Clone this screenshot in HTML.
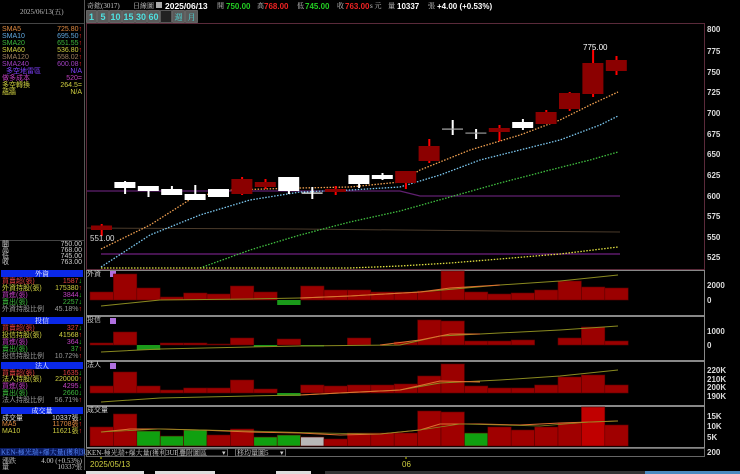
<!DOCTYPE html>
<html><head><meta charset="utf-8"><style>
html,body{margin:0;padding:0;background:#000;width:740px;height:474px;overflow:hidden}
svg{display:block}
text{font-family:"Liberation Sans","Noto Sans CJK TC",sans-serif;font-size:7px}
.s{font-family:"Liberation Serif","Noto Serif CJK SC",serif;font-size:7px}
.b{font-weight:bold;font-size:8.5px}
.b8{font-weight:bold;font-size:8px}
.btn{font-weight:bold;font-size:9px;fill:#4fe0e0}
.btnc{font-family:"Liberation Serif","Noto Serif CJK SC",serif;font-size:8px;fill:#4fe0e0}
.ax{font-size:8px;fill:#ddd;font-weight:bold}
</style></head><body>
<svg width="740" height="474" viewBox="0 0 740 474" xmlns="http://www.w3.org/2000/svg">
<rect width="740" height="474" fill="#000"/>
<line x1="84.5" y1="0" x2="84.5" y2="470" stroke="#555" stroke-width="1"/>
<line x1="0" y1="23.5" x2="84" y2="23.5" stroke="#444"/>
<text x="20" y="14" fill="#bbb" class="s">2025/06/13(五)</text>
<g class="s">
<text x="2" y="31" fill="#e08a40">SMA5</text><text x="82" y="31" fill="#e08a40" text-anchor="end">725.80<tspan fill="#f22">↑</tspan></text>
<text x="2" y="38" fill="#60a8e0">SMA10</text><text x="82" y="38" fill="#60a8e0" text-anchor="end">695.50<tspan fill="#f22">↑</tspan></text>
<text x="2" y="45" fill="#3cb83c">SMA20</text><text x="82" y="45" fill="#3cb83c" text-anchor="end">651.55<tspan fill="#f22">↑</tspan></text>
<text x="2" y="52" fill="#d0d040">SMA60</text><text x="82" y="52" fill="#d0d040" text-anchor="end">536.80<tspan fill="#f22">↑</tspan></text>
<text x="2" y="59" fill="#a08060">SMA120</text><text x="82" y="59" fill="#a08060" text-anchor="end">558.02<tspan fill="#f22">↑</tspan></text>
<text x="2" y="66" fill="#a040c0">SMA240</text><text x="82" y="66" fill="#a040c0" text-anchor="end">600.08<tspan fill="#f22">↑</tspan></text>
<text x="6" y="73" fill="#8040ff">多空地雷區</text><text x="82" y="73" fill="#8040ff" text-anchor="end">N/A</text>
<text x="2" y="80" fill="#c040c0">做多成本</text><text x="82" y="80" fill="#c040c0" text-anchor="end">520=</text>
<text x="2" y="87" fill="#d0d040">多空轉換</text><text x="82" y="87" fill="#d0d040" text-anchor="end">264.5=</text>
<text x="2" y="94" fill="#d0d040">蘊牆</text><text x="82" y="94" fill="#d0d040" text-anchor="end">N/A</text>
</g>
<line x1="0" y1="240.5" x2="84" y2="240.5" stroke="#444"/>
<g class="s" fill="#ccc">
<text x="2" y="246">開</text><text x="82" y="246" text-anchor="end">750.00</text>
<text x="2" y="252">高</text><text x="82" y="252" text-anchor="end">768.00</text>
<text x="2" y="258">低</text><text x="82" y="258" text-anchor="end">745.00</text>
<text x="2" y="264">收</text><text x="82" y="264" text-anchor="end">763.00</text>
</g>
<rect x="1" y="270" width="82" height="7" fill="#0a28e8"/><text x="42" y="276" fill="#fff" text-anchor="middle" class="s">外資</text>
<g class="s">
<text x="2" y="283" fill="#e04040">買賣超(張)</text><text x="82" y="283" fill="#e04040" text-anchor="end">1587<tspan fill="#2c2">↓</tspan></text>
<text x="2" y="290" fill="#d0d040">外資持股(張)</text><text x="82" y="290" fill="#d0d040" text-anchor="end">175380<tspan fill="#f22">↑</tspan></text>
<text x="2" y="297" fill="#c040c0">買進(張)</text><text x="82" y="297" fill="#c040c0" text-anchor="end">3844<tspan fill="#2c2">↓</tspan></text>
<text x="2" y="304" fill="#3cb83c">賣出(張)</text><text x="82" y="304" fill="#3cb83c" text-anchor="end">2257<tspan fill="#2c2">↓</tspan></text>
<text x="2" y="311" fill="#999">外資持股比例</text><text x="82" y="311" fill="#999" text-anchor="end">45.18%<tspan fill="#f22">↑</tspan></text>
</g>
<rect x="1" y="317" width="82" height="7" fill="#0a28e8"/><text x="42" y="323" fill="#fff" text-anchor="middle" class="s">投信</text>
<g class="s">
<text x="2" y="330" fill="#e04040">買賣超(張)</text><text x="82" y="330" fill="#e04040" text-anchor="end">327<tspan fill="#2c2">↓</tspan></text>
<text x="2" y="337" fill="#d0d040">投信持股(張)</text><text x="82" y="337" fill="#d0d040" text-anchor="end">41568<tspan fill="#f22">↑</tspan></text>
<text x="2" y="344" fill="#c040c0">買進(張)</text><text x="82" y="344" fill="#c040c0" text-anchor="end">364<tspan fill="#2c2">↓</tspan></text>
<text x="2" y="351" fill="#3cb83c">賣出(張)</text><text x="82" y="351" fill="#3cb83c" text-anchor="end">37<tspan fill="#f22">↑</tspan></text>
<text x="2" y="358" fill="#999">投信持股比例</text><text x="82" y="358" fill="#999" text-anchor="end">10.72%<tspan fill="#f22">↑</tspan></text>
</g>
<rect x="1" y="362" width="82" height="7" fill="#0a28e8"/><text x="42" y="368" fill="#fff" text-anchor="middle" class="s">法人</text>
<g class="s">
<text x="2" y="375" fill="#e04040">買賣超(張)</text><text x="82" y="375" fill="#e04040" text-anchor="end">1635<tspan fill="#2c2">↓</tspan></text>
<text x="2" y="381" fill="#d0d040">法人持股(張)</text><text x="82" y="381" fill="#d0d040" text-anchor="end">220000<tspan fill="#f22">↑</tspan></text>
<text x="2" y="388" fill="#c040c0">買進(張)</text><text x="82" y="388" fill="#c040c0" text-anchor="end">4295<tspan fill="#2c2">↓</tspan></text>
<text x="2" y="395" fill="#3cb83c">賣出(張)</text><text x="82" y="395" fill="#3cb83c" text-anchor="end">2660<tspan fill="#2c2">↓</tspan></text>
<text x="2" y="402" fill="#999">法人持股比例</text><text x="82" y="402" fill="#999" text-anchor="end">56.71%<tspan fill="#f22">↑</tspan></text>
</g>
<rect x="1" y="407" width="82" height="7" fill="#0a28e8"/><text x="42" y="413" fill="#fff" text-anchor="middle" class="s">成交量</text>
<g class="s">
<text x="2" y="420" fill="#ddd">成交量</text><text x="82" y="420" fill="#ddd" text-anchor="end">10337張<tspan fill="#2c2">↓</tspan></text>
<text x="2" y="426" fill="#e08a40">MA5</text><text x="82" y="426" fill="#e08a40" text-anchor="end">11708張<tspan fill="#f22">↑</tspan></text>
<text x="2" y="433" fill="#d0d040">MA10</text><text x="82" y="433" fill="#d0d040" text-anchor="end">11621張<tspan fill="#f22">↑</tspan></text>
</g>
<rect x="0" y="448" width="84" height="8" fill="#0a1a60"/>
<text x="1" y="454.5" fill="#5a8cff" class="s">KEN-極光瑞+爆大量(獲利3UP)</text>
<text x="2" y="463" fill="#ccc" class="s">漲跌</text><text x="82" y="463" fill="#ccc" text-anchor="end" class="s">4.00 (+0.53%)</text>
<text x="2" y="469" fill="#ccc" class="s">量</text><text x="82" y="469" fill="#ccc" text-anchor="end" class="s">10337張</text>

<text x="87" y="8" fill="#ccc" class="s">奇鋐(3017)</text>
<text x="133" y="8" fill="#ccc" class="s">日線圖</text>
<rect x="156" y="2" width="6" height="6" fill="#aaa"/>
<text x="165" y="9" fill="#fff" class="b">2025/06/13</text>
<text x="217" y="8" fill="#ccc" class="s">開</text><text x="226" y="9" fill="#2c2" class="b8">750.00</text>
<text x="257" y="8" fill="#ccc" class="s">高</text><text x="264" y="9" fill="#e22" class="b8">768.00</text>
<text x="297" y="8" fill="#ccc" class="s">低</text><text x="305" y="9" fill="#2c2" class="b8">745.00</text>
<text x="337" y="8" fill="#ccc" class="s">收</text><text x="345" y="9" fill="#e22" class="b8">763.00</text>
<text x="370" y="8" fill="#ccc" class="s">s 元</text>
<text x="388" y="8" fill="#ccc" class="s">量</text><text x="397" y="9" fill="#fff" class="b8">10337</text>
<text x="428" y="8" fill="#ccc" class="s">張</text>
<text x="437" y="9" fill="#fff" class="b8">+4.00 (+0.53%)</text>
<g stroke="#888" stroke-width="0.6" fill="#5a5a5a">
<rect x="86.5" y="10.5" width="10" height="12"/><rect x="97.5" y="10.5" width="11" height="12"/><rect x="109.5" y="10.5" width="12" height="12"/><rect x="122.5" y="10.5" width="12" height="12"/><rect x="135.5" y="10.5" width="11" height="12"/><rect x="147.5" y="10.5" width="12" height="12"/><rect x="160.5" y="10.5" width="11" height="12" fill="#222"/><rect x="172.5" y="10.5" width="12" height="12"/><rect x="185.5" y="10.5" width="12" height="12"/>
</g>
<text x="91.5" y="20" class="btn" text-anchor="middle">1</text><text x="103" y="20" class="btn" text-anchor="middle">5</text><text x="115.5" y="20" class="btn" text-anchor="middle">10</text><text x="128.5" y="20" class="btn" text-anchor="middle">15</text><text x="141" y="20" class="btn" text-anchor="middle">30</text><text x="153.5" y="20" class="btn" text-anchor="middle">60</text>
<text x="178.5" y="20" class="btnc" text-anchor="middle">週</text><text x="191.5" y="20" class="btnc" text-anchor="middle">月</text>

<rect x="86.5" y="23.5" width="618" height="246" fill="none" stroke="#5a2a3a"/>
<g>
<text class="ax" x="707" y="32">800</text><text class="ax" x="707" y="54">775</text><text class="ax" x="707" y="75">750</text><text class="ax" x="707" y="95">725</text><text class="ax" x="707" y="116">700</text><text class="ax" x="707" y="137">675</text><text class="ax" x="707" y="157">650</text><text class="ax" x="707" y="178">625</text><text class="ax" x="707" y="199">600</text><text class="ax" x="707" y="219">575</text><text class="ax" x="707" y="240">550</text><text class="ax" x="707" y="260">525</text>
</g>
<polyline points="87,191 400,191 420,196 620,196" fill="none" stroke="#602070" stroke-width="1.2"/>
<polyline points="87,228 300,229 500,231 620,232" fill="none" stroke="#4a3a2a" stroke-width="1"/>
<line x1="101" y1="254" x2="620" y2="254" stroke="#702080" stroke-width="1.2"/>
<polyline points="101,249 150,225 194,197 230,190 300,188 350,187 400,182 420,170 470,150 520,135 560,120 590,105 618,92" fill="none" stroke="#f0a050" stroke-width="1.3" stroke-dasharray="1.5 1.5"/>
<polyline points="101,267 150,235 200,215 250,200 300,192 350,190 400,187 440,175 480,160 520,150 560,140 600,125 618,116" fill="none" stroke="#7cc8f0" stroke-width="1.3" stroke-dasharray="1.5 1.5"/>
<polyline points="200,268 250,250 300,235 350,222 400,211 450,197 500,183 550,170 590,160 618,152" fill="none" stroke="#40c040" stroke-width="1.3" stroke-dasharray="1.5 1.5"/>
<polyline points="101,268 350,268 400,266 450,263 500,259 560,254 618,247" fill="none" stroke="#e0e040" stroke-width="1.3" stroke-dasharray="1.5 1.5"/>
<g stroke-width="2">
<line x1="101.7" y1="224" x2="101.7" y2="236" stroke="#f00"/><rect x="91" y="225.5" width="21" height="4.5" fill="#8b0000"/>
<line x1="125.1" y1="181" x2="125.1" y2="194" stroke="#fff"/><rect x="114.4" y="182" width="21" height="6" fill="#fff"/>
<line x1="148.5" y1="186" x2="148.5" y2="197" stroke="#fff"/><rect x="137.8" y="186" width="21" height="5" fill="#fff"/>
<line x1="171.9" y1="186" x2="171.9" y2="195" stroke="#fff"/><rect x="161.2" y="189" width="21" height="6" fill="#fff"/>
<line x1="195.3" y1="185" x2="195.3" y2="200" stroke="#fff"/><rect x="184.6" y="194" width="21" height="6" fill="#fff"/>
<line x1="218.7" y1="189" x2="218.7" y2="197" stroke="#fff"/><rect x="208" y="189" width="21" height="8" fill="#fff"/>
<line x1="242.1" y1="177" x2="242.1" y2="195" stroke="#f00"/><rect x="231.4" y="179" width="21" height="15" fill="#8b0000"/>
<line x1="265.5" y1="179" x2="265.5" y2="189" stroke="#f00"/><rect x="254.8" y="182" width="21" height="5" fill="#8b0000"/>
<line x1="288.9" y1="177" x2="288.9" y2="194" stroke="#fff"/><rect x="278.2" y="177" width="21" height="14" fill="#fff"/>
<line x1="312.3" y1="187" x2="312.3" y2="199" stroke="#fff"/><rect x="301.6" y="192.5" width="21" height="1.2" fill="#fff"/>
<line x1="335.7" y1="186" x2="335.7" y2="195" stroke="#f00"/><rect x="325" y="189" width="21" height="3" fill="#8b0000"/>
<line x1="359.1" y1="175" x2="359.1" y2="188" stroke="#fff"/><rect x="348.4" y="175" width="21" height="9" fill="#fff"/>
<line x1="382.5" y1="173" x2="382.5" y2="180" stroke="#fff"/><rect x="371.8" y="175" width="21" height="4" fill="#fff"/>
<line x1="405.9" y1="171" x2="405.9" y2="189" stroke="#f00"/><rect x="395.2" y="171" width="21" height="12" fill="#8b0000"/>
<line x1="429.3" y1="139" x2="429.3" y2="163" stroke="#f00"/><rect x="418.6" y="146" width="21" height="15" fill="#8b0000"/>
<line x1="452.7" y1="120" x2="452.7" y2="135" stroke="#fff"/><rect x="442" y="128.5" width="21" height="1.2" fill="#aaa"/>
<line x1="476.1" y1="129" x2="476.1" y2="139" stroke="#fff"/><rect x="465.4" y="132.5" width="21" height="1.2" fill="#999"/>
<line x1="499.5" y1="125" x2="499.5" y2="141" stroke="#f00"/><rect x="488.8" y="128" width="21" height="4" fill="#8b0000"/>
<line x1="522.9" y1="119" x2="522.9" y2="130" stroke="#fff"/><rect x="512.2" y="122" width="21" height="6" fill="#fff"/>
<line x1="546.3" y1="110" x2="546.3" y2="124" stroke="#f00"/><rect x="535.6" y="112" width="21" height="12" fill="#8b0000"/>
<line x1="569.7" y1="92" x2="569.7" y2="111" stroke="#f00"/><rect x="559" y="93" width="21" height="16" fill="#8b0000"/>
<line x1="593.1" y1="50" x2="593.1" y2="97" stroke="#f00"/><rect x="582.4" y="63" width="21" height="31" fill="#8b0000"/>
<line x1="616.5" y1="56" x2="616.5" y2="75" stroke="#f00"/><rect x="605.8" y="60" width="21" height="11" fill="#8b0000"/>
</g>
<text x="583" y="50" fill="#fff" style="font-size:8px">775.00</text>
<text x="90" y="241" fill="#ddd" style="font-size:8px">551.00</text>

<g fill="none" stroke="#888" stroke-width="1">
<rect x="86.5" y="270.5" width="618" height="45"/>
<rect x="86.5" y="316.5" width="618" height="44"/>
<rect x="86.5" y="361.5" width="618" height="44"/>
<rect x="86.5" y="406.5" width="618" height="41"/>
</g>
<g class="s" fill="#ccc">
<text x="87" y="276">外資</text><text x="87" y="322">投信</text><text x="87" y="367">法人</text><text x="87" y="412">成交量</text>
</g>
<g fill="#b070e0"><rect x="110" y="271" width="6" height="6"/><rect x="110" y="318" width="6" height="6"/><rect x="110" y="363" width="6" height="6"/></g>
<g>
<text class="ax" x="707" y="288">2000</text><text class="ax" x="707" y="303">0</text>
<text class="ax" x="707" y="334">1000</text><text class="ax" x="707" y="348">0</text>
<text class="ax" x="707" y="373">220K</text><text class="ax" x="707" y="382">210K</text><text class="ax" x="707" y="390">200K</text><text class="ax" x="707" y="399">190K</text>
<text class="ax" x="707" y="419">15K</text><text class="ax" x="707" y="429">10K</text><text class="ax" x="707" y="440">5K</text>
<text class="ax" x="707" y="455">200</text>
</g>
<g fill="#9b0000" stroke="#5a0000" stroke-width="0.6">
<rect x="90" y="292" width="23.4" height="8"/><rect x="113.4" y="274" width="23.4" height="26"/><rect x="136.8" y="288" width="23.4" height="12"/><rect x="160.2" y="297" width="23.4" height="3"/><rect x="183.6" y="293" width="23.4" height="7"/><rect x="207" y="294" width="23.4" height="6"/><rect x="230.4" y="286" width="23.4" height="14"/><rect x="253.8" y="292" width="23.4" height="8"/>
<rect x="300.6" y="286" width="23.4" height="14"/><rect x="324" y="290" width="23.4" height="10"/><rect x="347.4" y="290" width="23.4" height="10"/><rect x="370.8" y="292" width="23.4" height="8"/><rect x="394.2" y="292" width="23.4" height="8"/><rect x="417.6" y="291" width="23.4" height="9"/><rect x="441" y="271" width="23.4" height="29"/><rect x="464.4" y="292" width="23.4" height="8"/><rect x="487.8" y="294" width="23.4" height="6"/><rect x="511.2" y="293" width="23.4" height="7"/><rect x="534.6" y="290" width="23.4" height="10"/><rect x="558" y="281" width="23.4" height="19"/><rect x="581.4" y="287" width="23.4" height="13"/><rect x="604.8" y="288" width="23.4" height="12"/>
</g>
<rect x="277.2" y="300" width="23.4" height="5" fill="#1a9a1a"/>
<polyline points="101,306 160,300 250,299 300,298 350,296 420,292 500,285 560,281 618,275" fill="none" stroke="#8a8a20" stroke-width="1"/>
<polyline points="300,298 350,296 420,292 450,288 500,285" fill="none" stroke="#e07030" stroke-width="1"/>
<g fill="#9b0000" stroke="#5a0000" stroke-width="0.6">
<rect x="90" y="343" width="23.4" height="2"/><rect x="113.4" y="332" width="23.4" height="13"/><rect x="160.2" y="343" width="23.4" height="2"/><rect x="183.6" y="343" width="23.4" height="2"/><rect x="207" y="344" width="23.4" height="1"/><rect x="230.4" y="338" width="23.4" height="7"/><rect x="277.2" y="339" width="23.4" height="6"/><rect x="347.4" y="338" width="23.4" height="7"/><rect x="394.2" y="342" width="23.4" height="3"/><rect x="417.6" y="320" width="23.4" height="25"/><rect x="441" y="321" width="23.4" height="24"/><rect x="464.4" y="341" width="23.4" height="4"/><rect x="487.8" y="341" width="23.4" height="4"/><rect x="511.2" y="340" width="23.4" height="5"/><rect x="558" y="338" width="23.4" height="7"/><rect x="581.4" y="327" width="23.4" height="18"/><rect x="604.8" y="341" width="23.4" height="4"/>
</g>
<rect x="136.8" y="345" width="23.4" height="5" fill="#1a9a1a"/>
<rect x="253.8" y="345" width="23.4" height="1.5" fill="#1a9a1a"/><rect x="300.6" y="345" width="23.4" height="1.5" fill="#1a9a1a"/>
<polyline points="101,352 160,349 250,347 300,346 400,345 440,336 480,334 560,330 618,326" fill="none" stroke="#8a8a20" stroke-width="1"/>
<polyline points="380,345 420,340 450,334 480,334" fill="none" stroke="#e07030" stroke-width="1"/>
<g fill="#9b0000" stroke="#5a0000" stroke-width="0.6">
<rect x="90" y="386" width="23.4" height="7"/><rect x="113.4" y="372" width="23.4" height="21"/><rect x="136.8" y="386" width="23.4" height="7"/><rect x="160.2" y="390" width="23.4" height="3"/><rect x="183.6" y="388" width="23.4" height="5"/><rect x="207" y="388" width="23.4" height="5"/><rect x="230.4" y="380" width="23.4" height="13"/><rect x="253.8" y="389" width="23.4" height="4"/>
<rect x="300.6" y="385" width="23.4" height="8"/><rect x="324" y="386" width="23.4" height="7"/><rect x="347.4" y="385" width="23.4" height="8"/><rect x="370.8" y="385" width="23.4" height="8"/><rect x="394.2" y="384" width="23.4" height="9"/><rect x="417.6" y="376" width="23.4" height="17"/><rect x="441" y="364" width="23.4" height="29"/><rect x="464.4" y="386" width="23.4" height="7"/><rect x="487.8" y="388" width="23.4" height="5"/><rect x="511.2" y="388" width="23.4" height="5"/><rect x="534.6" y="385" width="23.4" height="8"/><rect x="558" y="377" width="23.4" height="16"/><rect x="581.4" y="375" width="23.4" height="18"/><rect x="604.8" y="385" width="23.4" height="8"/>
</g>
<rect x="277.2" y="393" width="23.4" height="3" fill="#1a9a1a"/>
<polyline points="101,402 160,398 250,396 300,395 400,390 440,383 500,380 560,376 618,370" fill="none" stroke="#8a8a20" stroke-width="1"/>
<polyline points="300,395 400,390 440,381 480,382" fill="none" stroke="#e07030" stroke-width="1"/>
<g stroke="#5a0000" stroke-width="0.6">
<rect x="90" y="427" width="23.4" height="19" fill="#a00000"/><rect x="113.4" y="414" width="23.4" height="32" fill="#a00000"/>
<rect x="136.8" y="431" width="23.4" height="15" fill="#10a010"/><rect x="160.2" y="436" width="23.4" height="10" fill="#10a010"/><rect x="183.6" y="430" width="23.4" height="16" fill="#10a010"/>
<rect x="207" y="435" width="23.4" height="11" fill="#a00000"/><rect x="230.4" y="429" width="23.4" height="17" fill="#a00000"/>
<rect x="253.8" y="437" width="23.4" height="9" fill="#10a010"/><rect x="277.2" y="435" width="23.4" height="11" fill="#10a010"/>
<rect x="300.6" y="437" width="23.4" height="9" fill="#b8b8b8"/>
<rect x="324" y="439" width="23.4" height="7" fill="#a00000"/><rect x="347.4" y="433" width="23.4" height="13" fill="#a00000"/><rect x="370.8" y="433" width="23.4" height="13" fill="#a00000"/><rect x="394.2" y="433" width="23.4" height="13" fill="#a00000"/><rect x="417.6" y="411" width="23.4" height="35" fill="#a00000"/><rect x="441" y="412" width="23.4" height="34" fill="#a00000"/>
<rect x="464.4" y="433" width="23.4" height="13" fill="#10a010"/>
<rect x="487.8" y="427" width="23.4" height="19" fill="#a00000"/><rect x="511.2" y="430" width="23.4" height="16" fill="#a00000"/><rect x="534.6" y="427" width="23.4" height="19" fill="#a00000"/><rect x="558" y="423" width="23.4" height="23" fill="#a00000"/><rect x="581.4" y="407" width="23.4" height="39" fill="#c00000"/><rect x="604.8" y="425" width="23.4" height="21" fill="#a00000"/>
</g>
<polyline points="101,432 130,429 160,429 200,430 250,432 300,433 340,435 380,434 420,430 440,424 480,424 520,425 560,423 590,422 618,421" fill="none" stroke="#e07030" stroke-width="1"/>
<polyline points="101,432 160,429 250,431 320,433 380,434 420,430 460,424 500,425 540,426 590,422 618,421" fill="none" stroke="#8a8a20" stroke-width="0.8"/>
<rect x="86.5" y="448.5" width="618" height="8" fill="#000" stroke="#666"/>
<text x="87" y="455" fill="#ccc" class="s">KEN-極光瑞+爆大量(獲利3UP)</text>
<rect x="177.5" y="449" width="50" height="7" fill="#000" stroke="#666"/><text x="179" y="455" fill="#ccc" class="s">疊附圖區</text><text x="222" y="455" fill="#ccc">▾</text>
<rect x="235.5" y="449" width="50" height="7" fill="#000" stroke="#666"/><text x="237" y="455" fill="#ccc" class="s">移均量圖5</text><text x="280" y="455" fill="#ccc">▾</text>
<line x1="101" y1="457" x2="101" y2="459" stroke="#cc0"/>
<line x1="406" y1="457" x2="406" y2="459" stroke="#cc0"/>
<text x="90" y="467" fill="#d0d040" style="font-size:8px">2025/05/13</text>
<text x="402" y="467" fill="#d0d040" style="font-size:8px">06</text>
<rect x="86" y="471" width="58" height="3" fill="#ddd"/>
<rect x="155" y="471" width="60" height="3" fill="#ddd"/>
<rect x="276" y="471" width="35" height="3" fill="#ddd"/>
<rect x="325" y="471" width="320" height="3" fill="#333"/>
<rect x="645" y="471" width="95" height="3" fill="#4a8ac0"/>
</svg>
</body></html>
